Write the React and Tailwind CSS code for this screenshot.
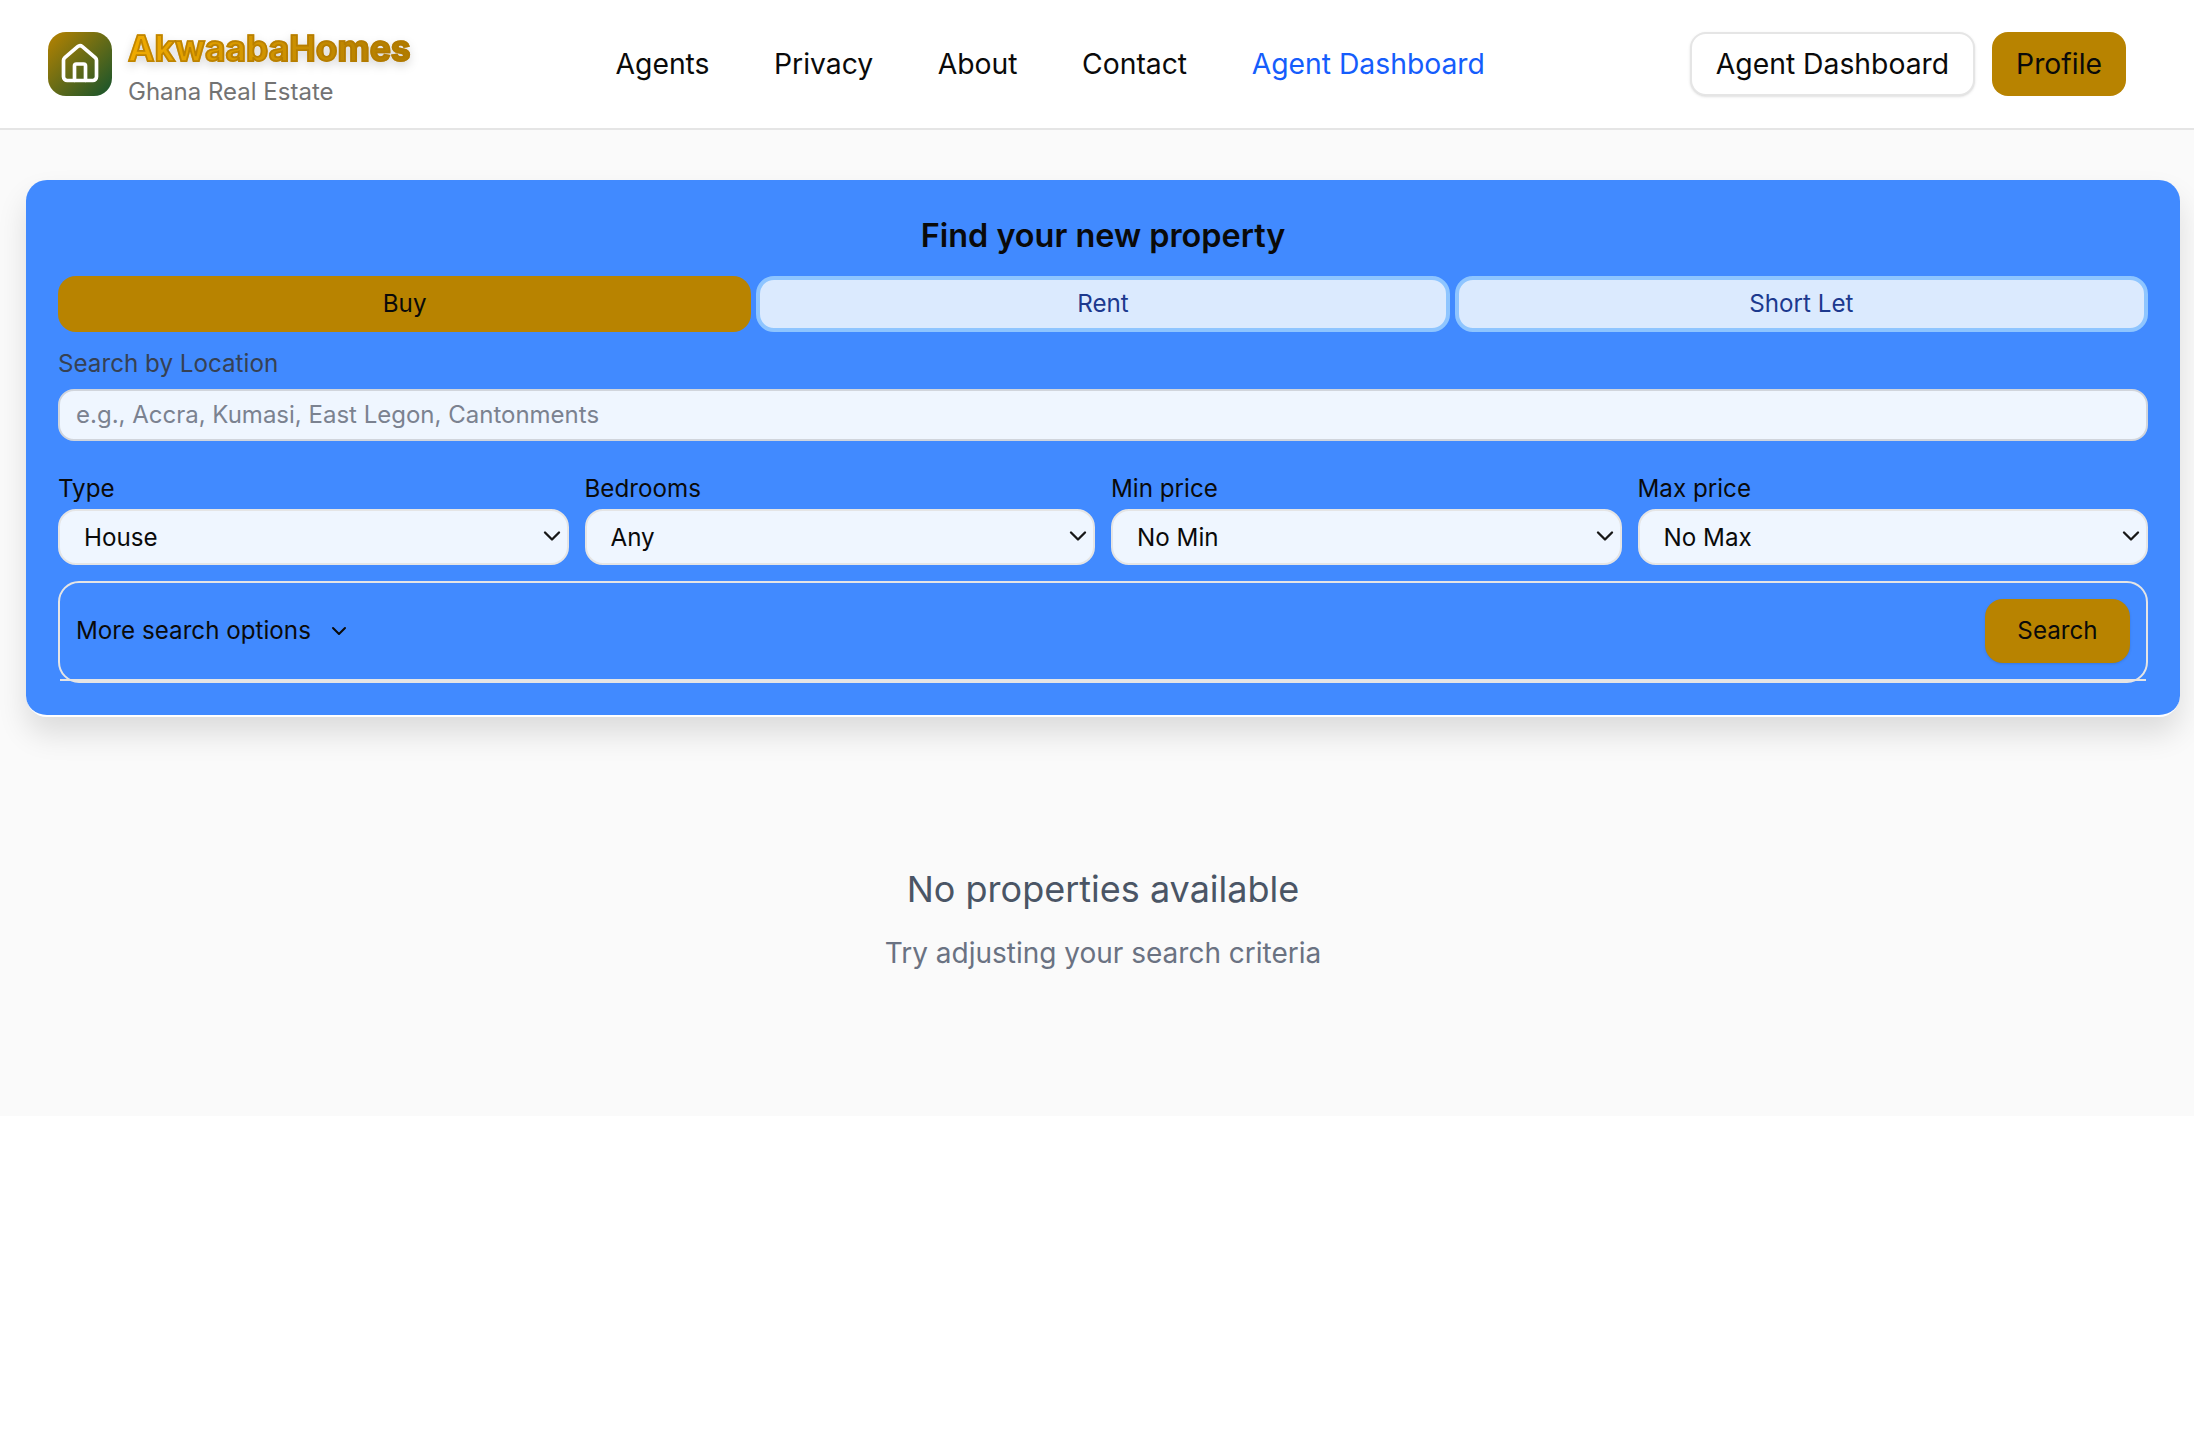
import React from 'react';
import { ChevronDown, House } from 'lucide-react';

const filters = [
    { label: 'Type', value: 'House', options: ['House', 'Apartment', 'Land'] },
    { label: 'Bedrooms', value: 'Any', options: ['Any', '1', '2', '3'] },
    { label: 'Min price', value: 'No Min', options: ['No Min'] },
    { label: 'Max price', value: 'No Max', options: ['No Max'] },
];

const navLinks = ['Agents', 'Privacy', 'About', 'Contact'];

const App = () => {
    return (
        <div className="min-h-[1434px] bg-white font-['Inter',sans-serif] text-[#0a0a0a]">
            <header className="flex h-[130px] items-center justify-between border-b-2 border-[#e5e5e5] bg-white pl-[48px] pr-[68px]">
                <div className="flex items-center gap-[16px]">
                    <div className="flex h-[64px] w-[64px] items-center justify-center rounded-[18px] bg-linear-to-br/srgb from-[#b88300] to-[#14532d]">
                        <House size={44} strokeWidth={2} className="text-white" />
                    </div>
                    <div className="flex flex-col pt-[8px]">
                        <span className="bg-gradient-to-r from-[#f0ab00] to-[#b07c00] bg-clip-text text-[35.4px] font-bold leading-[42px] text-transparent [-webkit-text-stroke:1.75px_rgba(176,120,0,0.75)] [filter:drop-shadow(0_4px_5px_rgba(0,0,0,0.15))]">
                            AkwaabaHomes
                        </span>
                        <span className="mt-[4px] text-[24px] leading-[35px] text-[#737373]">Ghana Real Estate</span>
                    </div>
                </div>
                <nav className="flex items-center gap-[64.5px] text-[28.3px]">
                    {navLinks.map((link) => (
                        <a key={link} href="#" className="text-[#0a0a0a]">{link}</a>
                    ))}
                    <a href="#" className="text-[#155dfc]">Agent Dashboard</a>
                </nav>
                <div className="flex items-center gap-[17px] text-[28.3px]">
                    <button className="flex h-[64px] items-center rounded-[16px] border-2 border-[#e5e5e5] bg-white px-[24px] shadow-sm">Agent Dashboard</button>
                    <button className="flex h-[64px] items-center rounded-[16px] bg-[#b88300] px-[24px]">Profile</button>
                </div>
            </header>

            <main className="h-[986px] bg-[#fafafa] px-[26px] pt-[50px]">
                <section className="h-[537px] w-[2154px] rounded-[21px] border-b-2 border-white bg-[#418aff] px-[32px] pt-[33px] shadow-[0_17px_30px_rgba(0,0,0,0.12)]">
                    <h2 className="text-center text-[32.4px] font-semibold leading-[46px] text-[#0a0a0a]">Find your new property</h2>
                    <div className="mt-[17px] grid grid-cols-3 gap-[5px] text-[24.2px]">
                        <button className="h-[56px] rounded-[18px] bg-[#b88300] text-[#0a0a0a]">Buy</button>
                        <button className="h-[56px] rounded-[18px] border-4 border-[#8ec5ff] bg-[#dbeafe] text-[#1c398e]">Rent</button>
                        <button className="h-[56px] rounded-[18px] border-4 border-[#8ec5ff] bg-[#dbeafe] text-[#1c398e]">Short Let</button>
                    </div>
                    <label className="mt-[14px] block text-[24.2px] leading-[35px] text-[#364153]">Search by Location</label>
                    <input
                        readOnly
                        placeholder="e.g., Accra, Kumasi, East Legon, Cantonments"
                        className="mt-[8px] block h-[52px] w-full rounded-[16px] border-2 border-[#d1d5dc] bg-[#eff6ff] px-[16px] pb-[2px] text-[24px] placeholder:text-[#7b8290]"
                    />
                    <div className="mt-[30px] grid grid-cols-4 gap-[16px]">
                        {filters.map((filter) => (
                            <div key={filter.label}>
                                <label className="block text-[24.2px] leading-[35px] text-[#0a0a0a]">{filter.label}</label>
                                <div className="relative mt-[3px]">
                                    <select
                                        defaultValue={filter.value}
                                        className="block h-[56px] w-full appearance-none rounded-[18px] border-2 border-[#e5e5e5] bg-[#eff6ff] px-[24px] pt-[2px] text-[24.2px] text-[#0a0a0a]"
                                    >
                                        {filter.options.map((option) => (
                                            <option key={option}>{option}</option>
                                        ))}
                                    </select>
                                    <ChevronDown size={28} strokeWidth={2} className="pointer-events-none absolute right-[3px] top-[13px] text-[#171717]" />
                                </div>
                            </div>
                        ))}
                    </div>
                    <div className="mt-[16px] h-[102px] rounded-[21px] border-2 border-[#e5e5e5]">
                        <div className="flex h-[98px] items-center justify-between border-b-2 border-[#e5e5e5] pl-[16px] pr-[16px]">
                            <button className="flex items-center gap-[16px] text-[24.2px] text-[#0a0a0a]">
                                More search options
                                <ChevronDown size={24} strokeWidth={2} />
                            </button>
                            <button className="h-[64px] w-[145px] rounded-[18px] bg-[#b88300] text-[24.2px] text-[#0a0a0a] shadow-sm">Search</button>
                        </div>
                    </div>
                </section>

                <div className="mt-[148px] w-[2154px] text-center">
                    <p className="text-[36px] leading-[49px] text-[#4a5565]">No properties available</p>
                    <p className="mt-[18px] text-[28px] leading-[42px] text-[#6a7282]">Try adjusting your search criteria</p>
                </div>
            </main>
        </div>
    );
};

export default App;
